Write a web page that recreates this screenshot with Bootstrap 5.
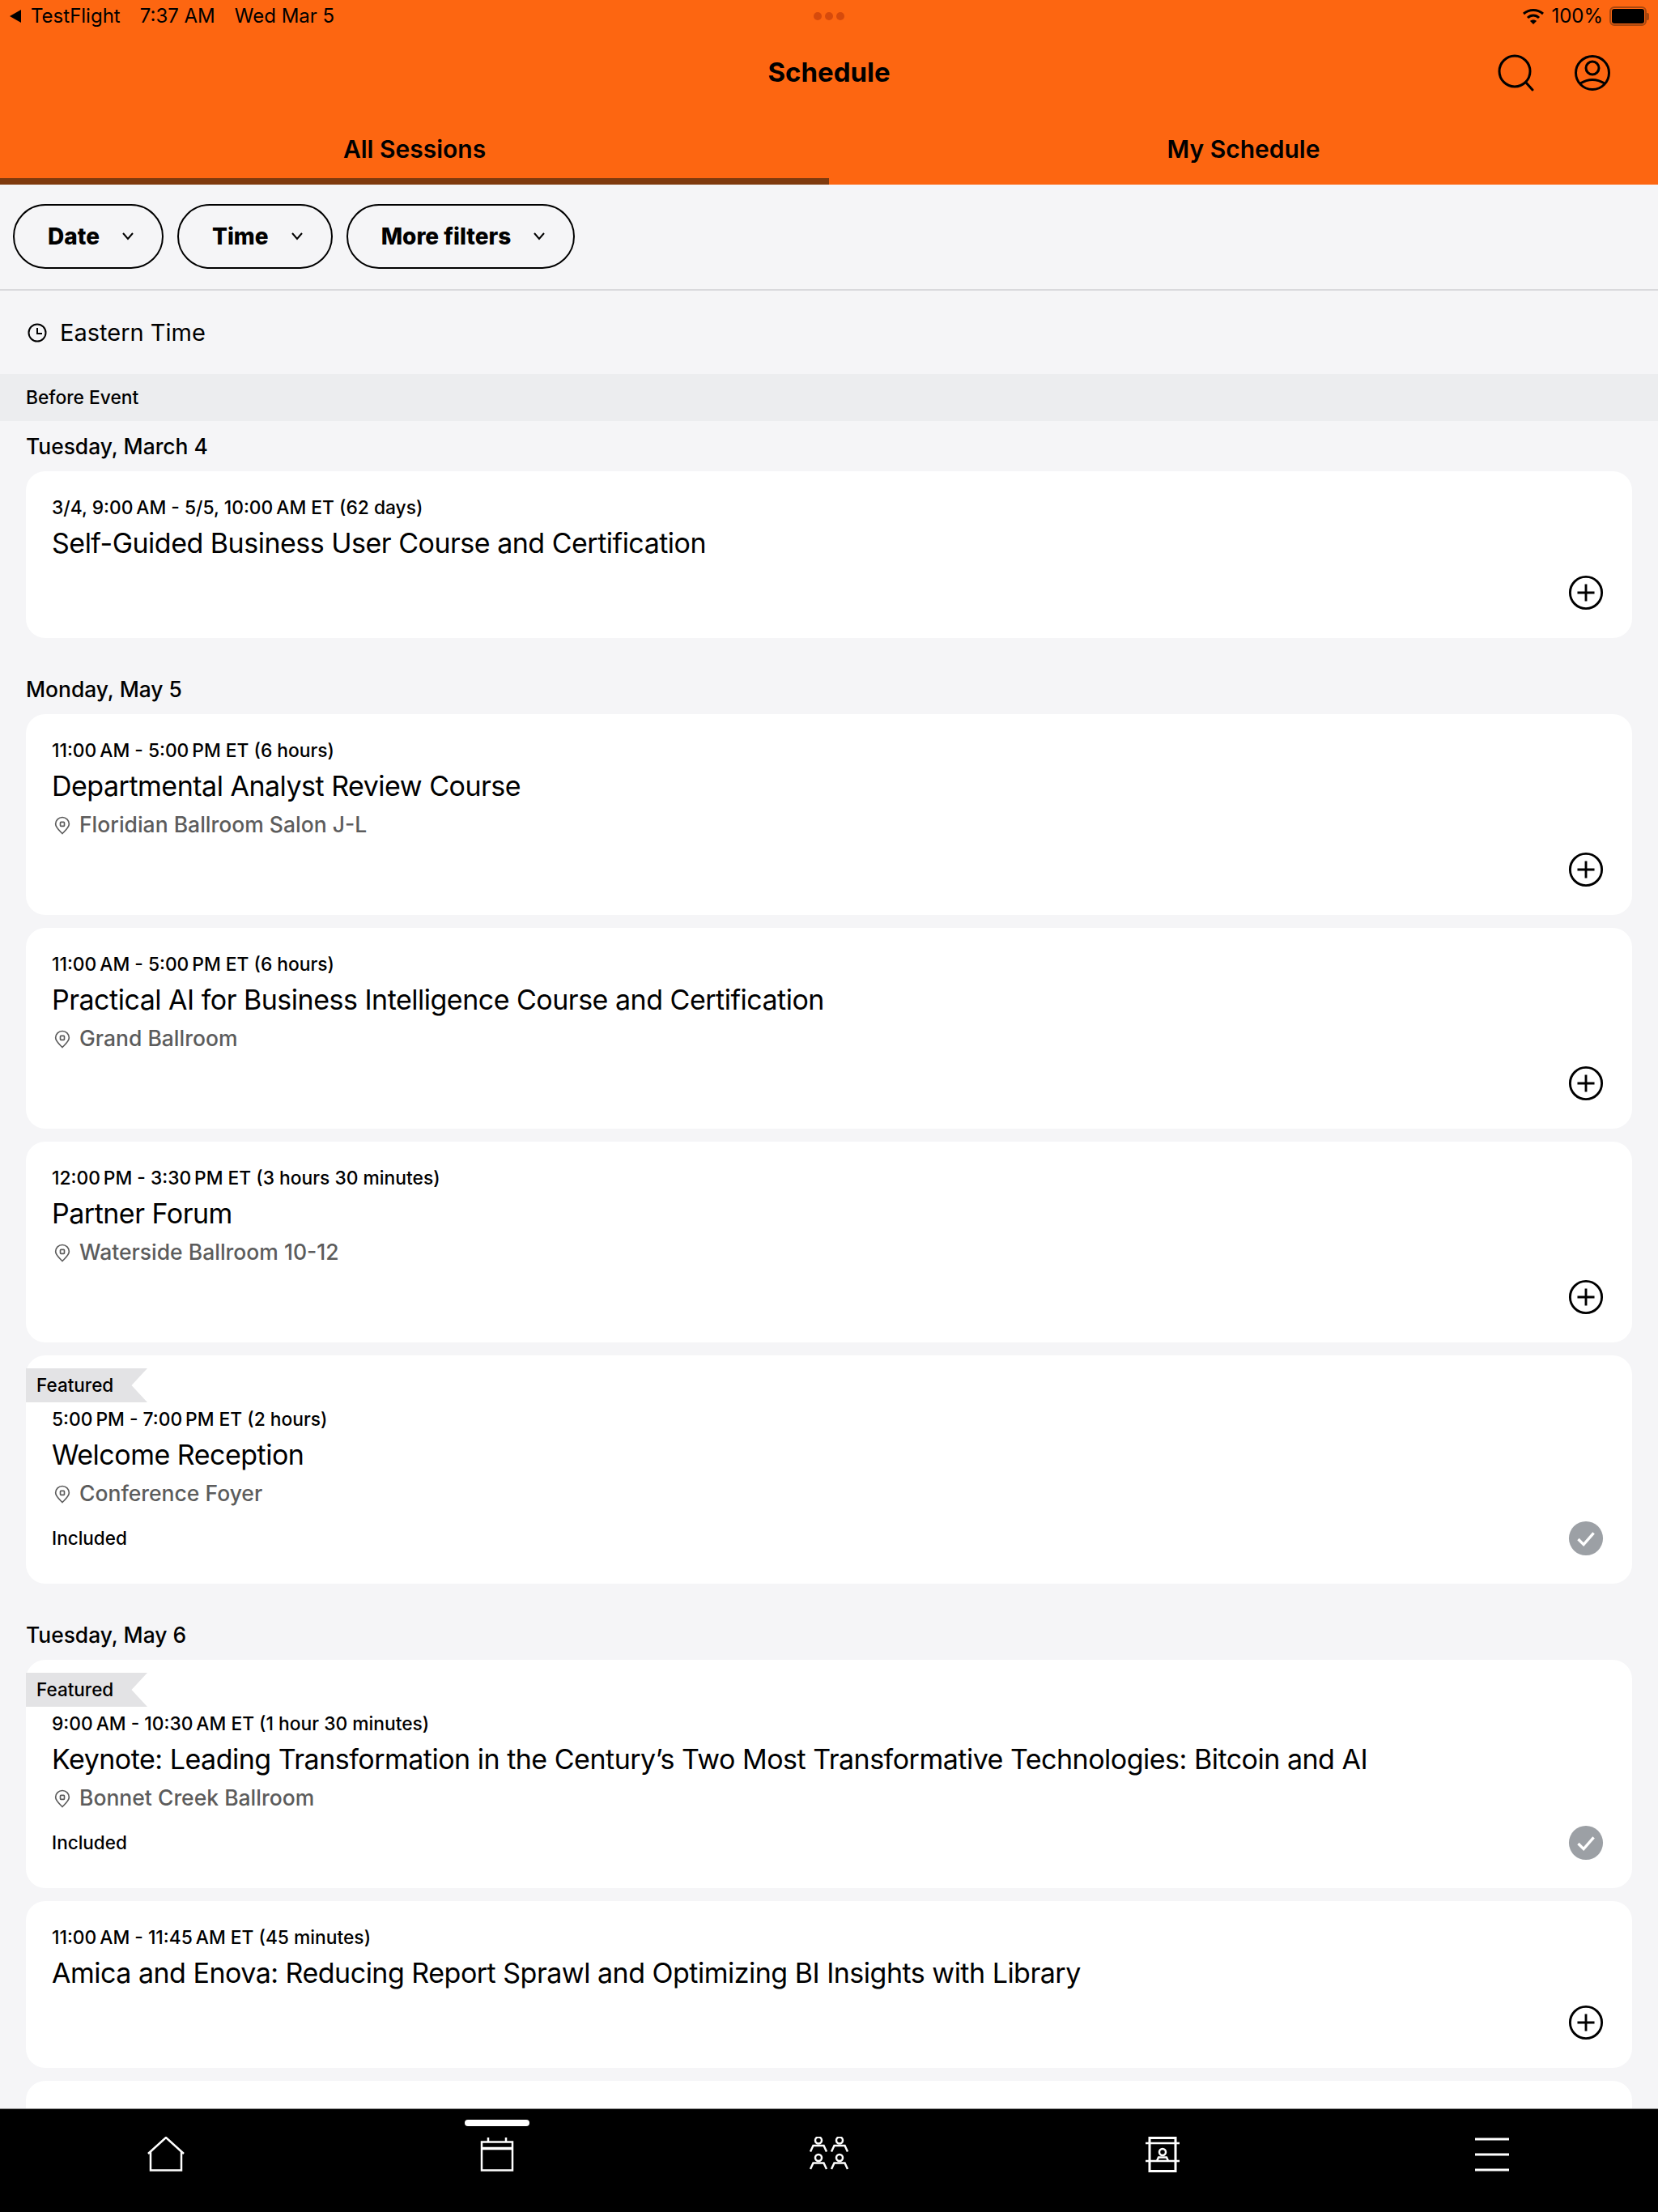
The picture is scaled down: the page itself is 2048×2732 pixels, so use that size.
<!DOCTYPE html>
<html lang="en">

<head>
    <meta charset="UTF-8">
    <meta name="viewport" content="width=device-width, initial-scale=1.0">
    <title>Schedule</title>
    <link href="https://cdn.jsdelivr.net/npm/bootstrap@5.3.5/dist/css/bootstrap.min.css" rel="stylesheet">
    <style>
        body {
            font-family: Inter, "Liberation Sans", sans-serif;
            background: #f5f5f7;
            color: #000;
            height: 2732px;
            overflow: hidden;
        }

        .app-top { background: #fd6611; }
        .status-bar { height: 40px; padding: 0 11px 0 10px; font-size: 24px; }
        .status-side { flex: 1 1 0; }
        .status-dot { width: 10px; height: 10px; background: #d64a0c; border-radius: 50%; }
        .battery-box { width: 46px; height: 24px; border: 2px solid #a8470f; border-radius: 6px; padding: 1px; }
        .battery-fill { background: #000; height: 100%; border-radius: 3px; }
        .battery-cap { width: 3px; height: 9px; background: #a8470f; border-radius: 0 2px 2px 0; }
        .title-bar { height: 100px; }
        .title-side { flex: 1 1 0; }
        .title-icons { margin-right: 58px; }
        .title-text { font-size: 33px; font-weight: 700; margin: 0; }
        .tab-item { flex: 1 1 0; height: 88px; padding-top: 8px; font-size: 30px; font-weight: 600; border-bottom: 8px solid transparent; color: #000; }
        .tab-item.is-active { border-bottom-color: #7f3a0e; }

        .filter-bar { height: 131px; padding: 24px 16px 0; border-bottom: 2px solid #d9d9dc; gap: 17px; }
        .pill-btn {
            height: 80px;
            padding: 0 35px 0 41px;
            gap: 28px;
            font-size: 28px;
            font-weight: 800;
            border: 2px solid #000;
            border-radius: 40px;
            background: transparent;
            color: #000;
        }

        .zone-row { height: 103px; padding-left: 34px; font-size: 29px; }
        .band-row { height: 58px; padding-left: 32px; background: #ecedef; font-size: 22.8px; font-weight: 500; }
        .day-label { height: 30px; line-height: 30px; padding-left: 32px; font-size: 26.4px; font-weight: 500; margin: 0 0 16px; }
        .day-first { margin-top: 16px; }
        .day-next { margin-top: 48px; }

        .list-wrap { flex: 1 1 0; min-height: 0; overflow: hidden; }
        .session-card { margin: 0 32px 16px; padding: 28px 32px 34px; border: 0; border-radius: 24px; background: #fff; }
        .session-card.has-ribbon { padding-top: 16px; }
        .last-stub { height: 60px; }
        .ribbon-tag {
            width: 150px;
            height: 42px;
            line-height: 42px;
            margin: 0 0 4px -32px;
            padding-left: 13px;
            background: #e3e3e5;
            font-size: 22.5px;
            font-weight: 500;
            clip-path: polygon(0 0, 100% 0, 87% 50%, 100% 100%, 0 100%);
        }
        .time-line { height: 34px; line-height: 34px; font-size: 22.8px; font-weight: 500; }
        .session-title { height: 54px; line-height: 54px; font-size: 34px; font-weight: 400; letter-spacing: -0.5px; margin: 0; }
        .place-line { height: 42px; font-size: 26.5px; font-weight: 500; color: #5c5c5c; gap: 11px; }
        .place-line svg { margin-left: 3px; }
        .foot-row { height: 44px; margin-top: 12px; font-size: 22.5px; font-weight: 500; }
        .foot-row svg { margin-right: 3px; }

        .tab-bottom { height: 128px; background: #000; border-top: 1px solid #8a8a8a; padding-top: 34px; }
        .bottom-slot { height: 46px; }
        .bottom-mark { top: -21px; left: 50%; margin-left: -40px; width: 80px; height: 8px; background: #fff; border-radius: 4px; }
    </style>
</head>

<body class="d-flex flex-column">
    <header class="app-top">
        <div class="status-bar d-flex align-items-center">
            <div class="status-side d-flex align-items-center">
                <svg class="me-2" width="20" height="20" viewBox="0 0 20 20"><path d="M16 2v16L2 10z" fill="#000"/></svg>
                <span class="me-4">TestFlight</span>
                <span class="me-4">7:37 AM</span>
                <span>Wed Mar 5</span>
            </div>
            <div class="d-flex gap-1 px-1">
                <span class="status-dot"></span><span class="status-dot"></span><span class="status-dot"></span>
            </div>
            <div class="status-side d-flex align-items-center justify-content-end">
                <svg class="me-2" width="28" height="20" viewBox="0 0 28 20" fill="none" stroke="#000" stroke-width="3">
                    <path d="M2 7c7-6 17-6 24 0"/><path d="M7 12c4-4 10-4 14 0"/><path d="M14 20l-4-4c2-2 6-2 8 0z" fill="#000" stroke="none"/>
                </svg>
                <span class="me-2">100%</span>
                <div class="battery-box"><div class="battery-fill"></div></div>
                <div class="battery-cap"></div>
            </div>
        </div>
        <div class="title-bar d-flex align-items-center">
            <div class="title-side"></div>
            <h1 class="title-text">Schedule</h1>
            <div class="title-side d-flex justify-content-end">
                <div class="title-icons d-flex align-items-center gap-5">
                    <svg width="46" height="46" viewBox="0 0 46 46" fill="none" stroke="#000" stroke-width="3">
                        <circle cx="21" cy="21" r="19"/><path d="M35 35l8 9" stroke-linecap="round"/>
                    </svg>
                    <svg width="46" height="46" viewBox="0 0 46 46" fill="none" stroke="#000" stroke-width="3">
                        <circle cx="23" cy="23" r="20.5"/><circle cx="23" cy="17" r="8"/><path d="M8 36Q23 27 38 36"/>
                    </svg>
                </div>
            </div>
        </div>
        <nav class="d-flex">
            <a class="tab-item is-active d-flex align-items-center justify-content-center text-decoration-none" href="#">All Sessions</a>
            <a class="tab-item d-flex align-items-center justify-content-center text-decoration-none" href="#">My Schedule</a>
        </nav>
    </header>

    <div class="filter-bar d-flex align-items-start">
        <button class="pill-btn d-flex align-items-center" type="button">Date
            <svg width="14" height="10" viewBox="0 0 14 10" fill="none" stroke="#000" stroke-width="2"><path d="M1 1l6 7 6-7"/></svg>
        </button>
        <button class="pill-btn d-flex align-items-center" type="button">Time
            <svg width="14" height="10" viewBox="0 0 14 10" fill="none" stroke="#000" stroke-width="2"><path d="M1 1l6 7 6-7"/></svg>
        </button>
        <button class="pill-btn d-flex align-items-center" type="button">More filters
            <svg width="14" height="10" viewBox="0 0 14 10" fill="none" stroke="#000" stroke-width="2"><path d="M1 1l6 7 6-7"/></svg>
        </button>
    </div>

    <div class="zone-row d-flex align-items-center gap-3">
        <svg width="24" height="24" viewBox="0 0 24 24" fill="none" stroke="#000" stroke-width="2"><circle cx="12" cy="12" r="10.5"/><path d="M12 6v7h6"/></svg>
        <span>Eastern Time</span>
    </div>
    <div class="band-row d-flex align-items-center">Before Event</div>

    <main class="list-wrap">
        <p class="day-label day-first">Tuesday, March 4</p>
        <div class="card session-card">
            <div class="time-line">3/4, 9:00&#8239;AM - 5/5, 10:00&#8239;AM ET (62 days)</div>
            <h2 class="session-title">Self-Guided Business User Course and Certification</h2>
            <div class="foot-row d-flex justify-content-between align-items-center"><span></span>
                <svg width="44" height="44" viewBox="0 0 46 46" fill="none" stroke="#000" stroke-width="3"><circle cx="23" cy="23" r="20.5"/><path d="M23 12v22M12 23h22"/></svg>
            </div>
        </div>

        <p class="day-label day-next">Monday, May 5</p>
        <div class="card session-card">
            <div class="time-line">11:00&#8239;AM - 5:00&#8239;PM ET (6 hours)</div>
            <h2 class="session-title">Departmental Analyst Review Course</h2>
            <div class="place-line d-flex align-items-center">
                <svg width="20" height="23" viewBox="0 0 24 26" fill="none" stroke="#5c5c5c" stroke-width="2"><path d="M12 25C7 20 2 16 2 11a10 10 0 0 1 20 0c0 5-5 9-10 14z"/><rect x="9" y="8" width="6" height="6" rx="1"/></svg>
                <span>Floridian Ballroom Salon J-L</span>
            </div>
            <div class="foot-row d-flex justify-content-between align-items-center"><span></span>
                <svg width="44" height="44" viewBox="0 0 46 46" fill="none" stroke="#000" stroke-width="3"><circle cx="23" cy="23" r="20.5"/><path d="M23 12v22M12 23h22"/></svg>
            </div>
        </div>
        <div class="card session-card">
            <div class="time-line">11:00&#8239;AM - 5:00&#8239;PM ET (6 hours)</div>
            <h2 class="session-title">Practical AI for Business Intelligence Course and Certification</h2>
            <div class="place-line d-flex align-items-center">
                <svg width="20" height="23" viewBox="0 0 24 26" fill="none" stroke="#5c5c5c" stroke-width="2"><path d="M12 25C7 20 2 16 2 11a10 10 0 0 1 20 0c0 5-5 9-10 14z"/><rect x="9" y="8" width="6" height="6" rx="1"/></svg>
                <span>Grand Ballroom</span>
            </div>
            <div class="foot-row d-flex justify-content-between align-items-center"><span></span>
                <svg width="44" height="44" viewBox="0 0 46 46" fill="none" stroke="#000" stroke-width="3"><circle cx="23" cy="23" r="20.5"/><path d="M23 12v22M12 23h22"/></svg>
            </div>
        </div>
        <div class="card session-card">
            <div class="time-line">12:00&#8239;PM - 3:30&#8239;PM ET (3 hours 30 minutes)</div>
            <h2 class="session-title">Partner Forum</h2>
            <div class="place-line d-flex align-items-center">
                <svg width="20" height="23" viewBox="0 0 24 26" fill="none" stroke="#5c5c5c" stroke-width="2"><path d="M12 25C7 20 2 16 2 11a10 10 0 0 1 20 0c0 5-5 9-10 14z"/><rect x="9" y="8" width="6" height="6" rx="1"/></svg>
                <span>Waterside Ballroom 10-12</span>
            </div>
            <div class="foot-row d-flex justify-content-between align-items-center"><span></span>
                <svg width="44" height="44" viewBox="0 0 46 46" fill="none" stroke="#000" stroke-width="3"><circle cx="23" cy="23" r="20.5"/><path d="M23 12v22M12 23h22"/></svg>
            </div>
        </div>
        <div class="card session-card has-ribbon">
            <div class="ribbon-tag">Featured</div>
            <div class="time-line">5:00&#8239;PM - 7:00&#8239;PM ET (2 hours)</div>
            <h2 class="session-title">Welcome Reception</h2>
            <div class="place-line d-flex align-items-center">
                <svg width="20" height="23" viewBox="0 0 24 26" fill="none" stroke="#5c5c5c" stroke-width="2"><path d="M12 25C7 20 2 16 2 11a10 10 0 0 1 20 0c0 5-5 9-10 14z"/><rect x="9" y="8" width="6" height="6" rx="1"/></svg>
                <span>Conference Foyer</span>
            </div>
            <div class="foot-row d-flex justify-content-between align-items-center"><span>Included</span>
                <svg width="44" height="44" viewBox="0 0 46 46"><circle cx="23" cy="23" r="22" fill="#9ca0a5"/><path d="M13 24l7 7 13-15" fill="none" stroke="#fff" stroke-width="3.5"/></svg>
            </div>
        </div>

        <p class="day-label day-next">Tuesday, May 6</p>
        <div class="card session-card has-ribbon">
            <div class="ribbon-tag">Featured</div>
            <div class="time-line">9:00&#8239;AM - 10:30&#8239;AM ET (1 hour 30 minutes)</div>
            <h2 class="session-title">Keynote: Leading Transformation in the Century’s Two Most Transformative Technologies: Bitcoin and AI</h2>
            <div class="place-line d-flex align-items-center">
                <svg width="20" height="23" viewBox="0 0 24 26" fill="none" stroke="#5c5c5c" stroke-width="2"><path d="M12 25C7 20 2 16 2 11a10 10 0 0 1 20 0c0 5-5 9-10 14z"/><rect x="9" y="8" width="6" height="6" rx="1"/></svg>
                <span>Bonnet Creek Ballroom</span>
            </div>
            <div class="foot-row d-flex justify-content-between align-items-center"><span>Included</span>
                <svg width="44" height="44" viewBox="0 0 46 46"><circle cx="23" cy="23" r="22" fill="#9ca0a5"/><path d="M13 24l7 7 13-15" fill="none" stroke="#fff" stroke-width="3.5"/></svg>
            </div>
        </div>
        <div class="card session-card">
            <div class="time-line">11:00&#8239;AM - 11:45&#8239;AM ET (45 minutes)</div>
            <h2 class="session-title">Amica and Enova: Reducing Report Sprawl and Optimizing BI Insights with Library</h2>
            <div class="foot-row d-flex justify-content-between align-items-center"><span></span>
                <svg width="44" height="44" viewBox="0 0 46 46" fill="none" stroke="#000" stroke-width="3"><circle cx="23" cy="23" r="20.5"/><path d="M23 12v22M12 23h22"/></svg>
            </div>
        </div>
        <div class="card session-card last-stub"></div>
    </main>

    <nav class="tab-bottom row g-0 flex-shrink-0">
        <div class="col bottom-slot d-flex justify-content-center">
            <svg width="46" height="46" viewBox="0 0 46 46" fill="none" stroke="#fff" stroke-width="2.5"><path d="M1 21L23 1l22 20"/><path d="M4 18v23.5h38V18"/></svg>
        </div>
        <div class="col bottom-slot d-flex justify-content-center position-relative">
            <span class="bottom-mark position-absolute"></span>
            <svg width="42" height="46" viewBox="0 0 42 46" fill="none" stroke="#fff" stroke-width="2.5"><rect x="2" y="6.5" width="38" height="35"/><path d="M2 14.5h38" stroke-width="3.5"/><path d="M10 1v5M32 1v5"/></svg>
        </div>
        <div class="col bottom-slot d-flex justify-content-center">
            <svg width="48" height="46" viewBox="0 0 48 46" fill="none" stroke="#fff" stroke-width="2.5"><circle cx="11" cy="4.5" r="4"/><circle cx="37" cy="4.5" r="4"/><path d="M1 18.5l3.5-7.5h13l3.5 7.5M27 18.5l3.5-7.5h13l3.5 7.5"/><circle cx="11" cy="26" r="4"/><circle cx="37" cy="26" r="4"/><path d="M1 40l3.5-7.5h13L21 40M27 40l3.5-7.5h13L47 40"/></svg>
        </div>
        <div class="col bottom-slot d-flex justify-content-center">
            <svg class="ms-1" width="42" height="46" viewBox="0 0 42 46" fill="none" stroke="#fff" stroke-width="3"><rect x="5" y="1.5" width="32" height="41"/><path d="M0 8h42M0 30h42" stroke-width="2.5"/><circle cx="21" cy="19" r="4" stroke-width="2.5"/><path d="M14 30l2-4.5h10l2 4.5" stroke-width="2.5"/></svg>
        </div>
        <div class="col bottom-slot d-flex justify-content-center">
            <svg width="42" height="46" viewBox="0 0 42 46" fill="none" stroke="#fff" stroke-width="3"><path d="M0 3h42M0 22h42M0 41h42"/></svg>
        </div>
    </nav>

    <script src="https://cdn.jsdelivr.net/npm/bootstrap@5.3.5/dist/js/bootstrap.bundle.min.js"></script>
</body>

</html>
